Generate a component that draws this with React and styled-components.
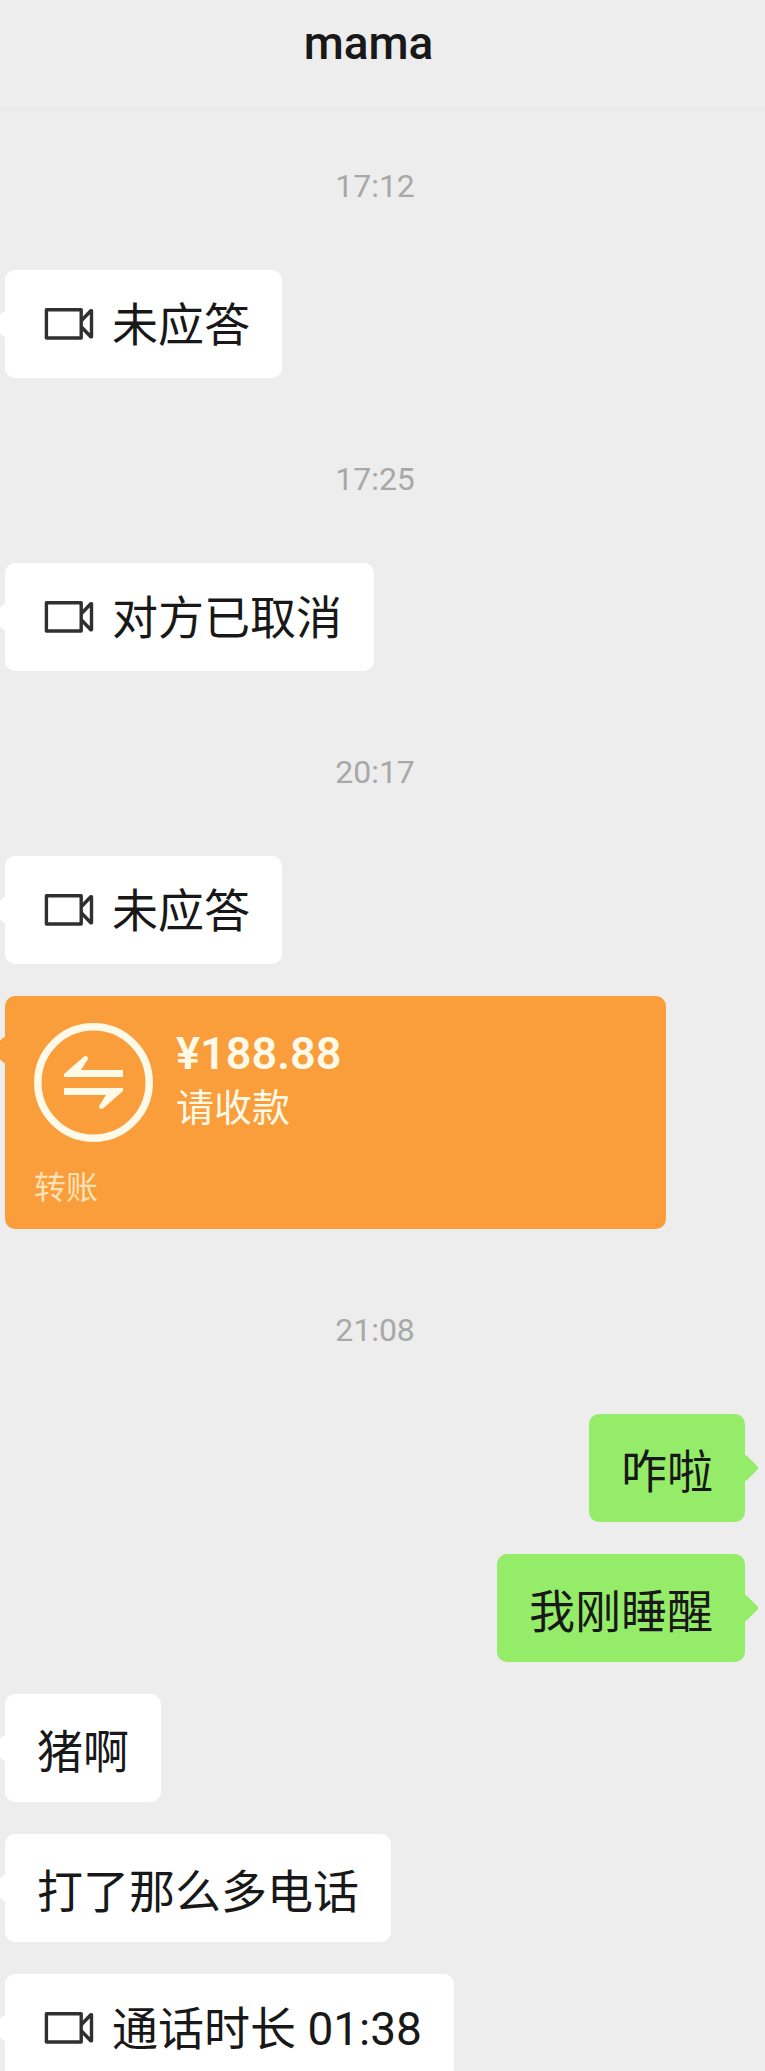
import React from "react";
import styled, { createGlobalStyle } from "styled-components";

const GlobalStyle = createGlobalStyle`
	* {
		box-sizing: border-box;
	}

	body {
		margin: 0;
		background: #ededed;
		color: #181818;
		font-family: Roboto, "Noto Sans CJK SC", sans-serif;
	}
`;

const Screen = styled.div`
	height: 100vh;
	overflow: hidden;
	display: flex;
	flex-direction: column;
	background: #ededed;
`;

const Header = styled.header`
	flex: none;
	padding: 16px 28px 38px 0;
	border-bottom: 1px solid #e5e5e5;
	text-align: center;
`;

const Title = styled.h1`
	margin: 0;
	font-size: 46px;
	line-height: 54px;
	font-weight: 500;
`;

const Messages = styled.main`
	flex: 1;
	min-height: 0;
	display: flex;
	flex-direction: column;
	gap: 32px;
	padding: 8px 20px 0 5px;
`;

const Time = styled.time`
	flex: none;
	padding: 51px 0 34px;
	color: #a8a8a8;
	font-size: 32px;
	line-height: 36px;
	text-align: center;
`;

const Balloon = styled.div`
	position: relative;
	flex: none;
	align-self: ${({ $mine }) => ($mine ? "flex-end" : "flex-start")};
	border-radius: 10px;
	background: ${({ $color }) => $color};

	&::before {
		content: "";
		position: absolute;
		top: 44px;
		${({ $mine }) => ($mine ? "right" : "left")}: -10px;
		width: 20px;
		height: 20px;
		border-radius: 3px;
		background: inherit;
		transform: rotate(45deg);
	}
`;

const TextBalloon = styled(Balloon)`
	padding: 26px 32px 18px;
	font-size: 46px;
	line-height: 64px;
	white-space: nowrap;
`;

const CallBalloon = styled(TextBalloon)`
	display: flex;
	align-items: center;
	gap: 17px;
	padding: 23px 32px 21px;
`;

const TransferBalloon = styled(Balloon)`
	width: calc(100% - 79px);
	padding: 27px 29px 21px;
	color: #fff9e8;
`;

const TransferBody = styled.div`
	display: flex;
	gap: 22px;
`;

const TransferText = styled.div`
	padding-top: 4px;
`;

const Amount = styled.div`
	font-size: 45px;
	line-height: 54px;
	font-weight: 600;
`;

const Note = styled.div`
	font-size: 38px;
	line-height: 54px;
`;

const TransferLabel = styled.div`
	margin-top: 25px;
	color: #fde2b8;
	font-size: 32px;
	line-height: 40px;
`;

const VideoIcon = () => (
	<svg
		width="58"
		height="36"
		viewBox="0 0 58 36"
		fill="none"
		stroke="#303030"
		strokeWidth="3.4"
		strokeLinejoin="round"
		aria-hidden="true"
	>
		<rect x="9.4" y="2.8" width="34.8" height="28.2" />
		<path d="M44.5 13.5 L53.8 3.8 H54.5 V29.7 H53.8 L44.5 20" />
	</svg>
);

const TransferIcon = () => (
	<svg width="120" height="120" viewBox="0 0 120 120" aria-hidden="true">
		<circle
			cx="59.5"
			cy="59.5"
			r="55.7"
			fill="none"
			stroke="#fff9e8"
			strokeWidth="7.5"
		/>
		<path
			d="M30 54 V51 L50 33.5 Q54 32 54 36 L47 47 H89 V54 Z"
			fill="#fff9e8"
		/>
		<path
			d="M89 65 V68 L69 85.5 Q65 87 65 83 L72 72 H30 V65 Z"
			fill="#fff9e8"
		/>
	</svg>
);

const messages = [
	{ type: "time", text: "17:12" },
	{ type: "call", text: "未应答" },
	{ type: "time", text: "17:25" },
	{ type: "call", text: "对方已取消" },
	{ type: "time", text: "20:17" },
	{ type: "call", text: "未应答" },
	{ type: "transfer", amount: "¥188.88", text: "请收款", label: "转账" },
	{ type: "time", text: "21:08" },
	{ type: "text", text: "咋啦", mine: true },
	{ type: "text", text: "我刚睡醒", mine: true },
	{ type: "text", text: "猪啊" },
	{ type: "text", text: "打了那么多电话" },
	{ type: "call", text: "通话时长 01:38" },
];

const Message = ({ message }) => {
	if (message.type === "time") {
		return <Time>{message.text}</Time>;
	}

	if (message.type === "transfer") {
		return (
			<TransferBalloon $color="#fa9d3b">
				<TransferBody>
					<TransferIcon />
					<TransferText>
						<Amount>{message.amount}</Amount>
						<Note>{message.text}</Note>
					</TransferText>
				</TransferBody>
				<TransferLabel>{message.label}</TransferLabel>
			</TransferBalloon>
		);
	}

	if (message.type === "call") {
		return (
			<CallBalloon $color="#fff">
				<VideoIcon />
				<span>{message.text}</span>
			</CallBalloon>
		);
	}

	return (
		<TextBalloon
			$mine={message.mine}
			$color={message.mine ? "#95ec69" : "#fff"}
		>
			{message.text}
		</TextBalloon>
	);
};

function App() {
	return (
		<Screen lang="zh-CN">
			<GlobalStyle />
			<Header>
				<Title>mama</Title>
			</Header>
			<Messages>
				{messages.map((message, index) => (
					<Message key={index} message={message} />
				))}
			</Messages>
		</Screen>
	);
}

export default App;
